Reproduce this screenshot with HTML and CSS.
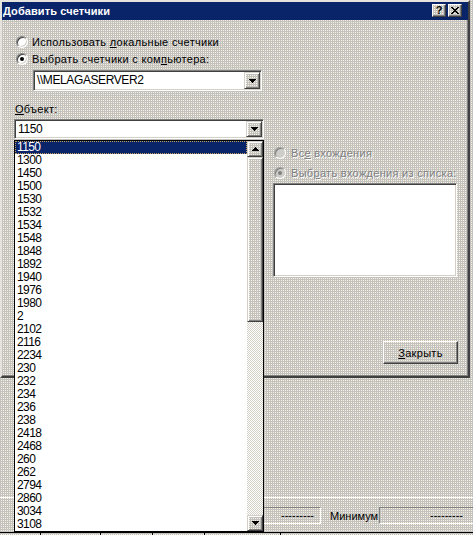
FILE: index.html
```html
<!DOCTYPE html>
<html lang="ru">
<head>
<meta charset="utf-8">
<title>Добавить счетчики</title>
<link rel="stylesheet" href="styles.css">
</head>
<body>
<div class="monitor face">
  <div class="status">
    <div class="stat-row">
      <div class="field first">---------</div>
      <span class="stat-label">Минимум</span>
      <div class="field second">---------</div>
    </div>
    <div class="axis"><i></i><i></i><i></i><i></i><i></i></div>
  </div>
</div>

<div class="dialog face">
  <div class="titlebar">
    <span class="title">Добавить счетчики</span>
    <div class="caption-btns">
      <span class="cap-btn face">?</span>
      <span class="cap-btn face">
        <svg width="8" height="7" viewBox="0 0 8 7" shape-rendering="crispEdges"><path d="M0 0h2v1h1v1h2v-1h1v-1h2v1h-1v1h-1v1h-1v1h1v1h1v1h1v1h-2v-1h-1v-1h-2v1h-1v1h-2v-1h1v-1h1v-1h1v-1h-1v-1h-1v-1h-1z" fill="#000"/></svg>
      </span>
    </div>
  </div>
  <div class="dlg-body">
    <div class="radio-row"><span class="radio"></span><span>Использовать <u>л</u>окальные счетчики</span></div>
    <div class="radio-row"><span class="radio checked"></span><span>Выбрать счетчики с ком<u>п</u>ьютера:</span></div>
    <div class="combo server">
      <span class="combo-text">\\MELAGASERVER2</span>
      <span class="drop-btn face"><svg width="7" height="4" viewBox="0 0 7 4" shape-rendering="crispEdges"><path d="M0 0h7v1h-1v1h-1v1h-1v1h-1v-1h-1v-1h-1v-1h-1z" fill="#000"/></svg></span>
    </div>
    <div class="label"><u>О</u>бъект:</div>
    <div class="combo object">
      <span class="combo-text">1150</span>
      <span class="drop-btn face"><svg width="7" height="4" viewBox="0 0 7 4" shape-rendering="crispEdges"><path d="M0 0h7v1h-1v1h-1v1h-1v1h-1v-1h-1v-1h-1v-1h-1z" fill="#000"/></svg></span>
      <div class="dropdown">
        <div class="dd-items">
          <div class="dd-item sel">1150</div>
          <div class="dd-item">1300</div>
          <div class="dd-item">1450</div>
          <div class="dd-item">1500</div>
          <div class="dd-item">1530</div>
          <div class="dd-item">1532</div>
          <div class="dd-item">1534</div>
          <div class="dd-item">1548</div>
          <div class="dd-item">1848</div>
          <div class="dd-item">1892</div>
          <div class="dd-item">1940</div>
          <div class="dd-item">1976</div>
          <div class="dd-item">1980</div>
          <div class="dd-item">2</div>
          <div class="dd-item">2102</div>
          <div class="dd-item">2116</div>
          <div class="dd-item">2234</div>
          <div class="dd-item">230</div>
          <div class="dd-item">232</div>
          <div class="dd-item">234</div>
          <div class="dd-item">236</div>
          <div class="dd-item">238</div>
          <div class="dd-item">2418</div>
          <div class="dd-item">2468</div>
          <div class="dd-item">260</div>
          <div class="dd-item">262</div>
          <div class="dd-item">2794</div>
          <div class="dd-item">2860</div>
          <div class="dd-item">3034</div>
          <div class="dd-item">3108</div>
        </div>
        <div class="sb">
          <span class="sb-btn face"><svg width="7" height="4" viewBox="0 0 7 4" shape-rendering="crispEdges"><path d="M3 0h1v1h1v1h1v1h1v1h-7v-1h1v-1h1v-1h1z" fill="#000"/></svg></span>
          <span class="sb-thumb face"></span>
          <span class="sb-track"></span>
          <span class="sb-btn face"><svg width="7" height="4" viewBox="0 0 7 4" shape-rendering="crispEdges"><path d="M0 0h7v1h-1v1h-1v1h-1v1h-1v-1h-1v-1h-1v-1h-1z" fill="#000"/></svg></span>
        </div>
      </div>
    </div>
    <div class="instances">
      <div class="radio-row dis"><span class="radio off"></span><span>Вс<u>е</u> вхождения</span></div>
      <div class="radio-row dis"><span class="radio off checked"></span><span>Выб<u>р</u>ать вхождения из списка:</span></div>
      <div class="listbox"></div>
      <div class="close-btn face"><span><u>З</u>акрыть</span></div>
    </div>
  </div>
</div>
</body>
</html>
```

FILE: styles.css
```css
* { box-sizing: border-box; }
html, body { margin: 0; padding: 0; }
body {
  width: 473px;
  height: 535px;
  overflow: hidden;
  position: relative;
  font-family: "Liberation Sans", Arial, sans-serif;
  font-size: 11px;
  color: #000;
  background: #c6c4c0;
}
u { text-decoration: underline; text-underline-offset: 1px; }

.face {
  background-color: #c3c2bf;
  background-image: conic-gradient(#f6f0e0 0 25%, transparent 0);
  background-size: 2px 2px;
}

/* back window */
.monitor {
  position: absolute;
  left: 0; top: 0;
  width: 473px; height: 535px;
  display: flex;
  flex-direction: column;
  justify-content: flex-end;
}
.status { border-top: 1px solid #fff; padding-top: 9px; }
.stat-row { display: flex; align-items: center; height: 17px; margin-bottom: 8px; white-space: nowrap; }
.field {
  height: 17px;
  border: 1px solid;
  border-color: #808080 #fff #fff #808080;
  text-align: right;
  line-height: 15px;
  flex: none;
}
.field.first { margin-left: 200px; width: 121px; padding-right: 6px; }
.stat-label { margin-left: 9px; width: 44px; flex: none; }
.field.second { margin-left: 5px; width: 100px; padding-right: 15px; }
.axis { border-top: 1px solid #000; height: 3px; display: flex; }
.axis i { width: 1px; height: 2px; background: #000; flex: none; }
.axis i:nth-child(1) { margin-left: 40px; }
.axis i:nth-child(2) { margin-left: 59px; }
.axis i:nth-child(3) { margin-left: 51px; }
.axis i:nth-child(4) { margin-left: 51px; }
.axis i:nth-child(5) { margin-left: 75px; }

/* dialog */
.dialog {
  position: absolute;
  left: 0; top: 0;
  width: 470px; height: 378px;
  border: 2px solid;
  border-color: #e6e3de #404040 #404040 #e6e3de;
  box-shadow: inset -1px -1px #808080;
}
.titlebar {
  height: 18px;
  background: #0a246a;
  color: #fff;
  display: flex;
  align-items: flex-start;
  padding-left: 1px;
}
.title { font-weight: bold; font-size: 11px; line-height: 18px; letter-spacing: 0.1px; }
.caption-btns { margin-left: auto; margin-right: 6px; margin-top: 2px; display: flex; gap: 2px; }
.cap-btn {
  width: 14px; height: 13px;
  border: 1px solid;
  border-color: #fff #404040 #404040 #fff;
  box-shadow: inset -1px -1px #808080;
  color: #000;
  font-weight: bold;
  font-size: 11px;
  line-height: 11px;
  display: flex;
  align-items: center;
  justify-content: center;
}

.dlg-body { padding: 13px 0 0 12px; }
.radio-row { display: flex; align-items: center; height: 17px; margin-left: 2px; white-space: nowrap; letter-spacing: 0.3px; }
.radio {
  width: 12px; height: 12px;
  border-radius: 50%;
  background: #fff;
  border: 1px solid;
  border-color: #808080 #fff #fff #808080;
  box-shadow: inset 1px 1px #404040, inset -1px -1px #d4d0c8;
  margin-right: 4px;
  flex: none;
  display: flex;
  align-items: center;
  justify-content: center;
}
.radio.checked::after {
  content: "";
  width: 4px; height: 4px;
  border-radius: 50%;
  background: #000;
}
.radio.off { background: #cfcdc9; box-shadow: inset 1px 1px #808080; border-color: #a0a0a0 #fff #fff #a0a0a0; margin-right: 5px; }
.radio.off.checked::after { background: #808080; }
.dis { color: #808080; text-shadow: 1px 1px #fff; }

.combo {
  display: flex;
  align-items: stretch;
  border: 1px solid;
  border-color: #808080 #fff #fff #808080;
  box-shadow: inset 1px 1px #404040, inset -1px -1px #d4d0c8;
  background: #fff;
  padding: 1px;
  position: relative;
}
.combo-text { flex: 1; padding-left: 2px; line-height: 17px; font-size: 12px; letter-spacing: -0.4px; }
.combo.server { margin-left: 19px; margin-top: 3px; width: 229px; height: 21px; }
.combo.object { margin-top: 3px; width: 250px; height: 20px; }
.combo.object .combo-text { line-height: 16px; }
.drop-btn {
  width: 16px;
  flex: none;
  border: 1px solid;
  border-color: #d4d0c8 #404040 #404040 #d4d0c8;
  box-shadow: inset 1px 1px #fff, inset -1px -1px #808080;
  display: flex;
  align-items: center;
  justify-content: center;
}
.label { margin: 11px 0 0 1px; line-height: 14px; letter-spacing: 0.3px; }

.dropdown {
  position: absolute;
  left: -1px; top: 20px;
  width: 250px; height: 392px;
  border: 1px solid #000;
  background: #fff;
  display: flex;
  z-index: 5;
}
.dd-items { flex: 1; }
.dd-item { height: 13px; line-height: 13px; padding-left: 2px; font-size: 12px; letter-spacing: -0.6px; }
.dd-item.sel { background: #0a246a; color: #fff; outline: 1px dotted #c0a060; outline-offset: -1px; }
.sb { width: 16px; display: flex; flex-direction: column; flex: none; }
.sb-btn, .sb-thumb {
  border: 1px solid;
  border-color: #d4d0c8 #404040 #404040 #d4d0c8;
  box-shadow: inset 1px 1px #fff, inset -1px -1px #808080;
  flex: none;
}
.sb-btn { height: 16px; display: flex; align-items: center; justify-content: center; }
.sb-thumb { height: 165px; }
.sb-track {
  flex: 1;
  background-color: #fff;
  background-image: conic-gradient(#d4d0c8 0 25%, transparent 0 50%, #d4d0c8 0 75%, transparent 0);
  background-size: 2px 2px;
}

.instances {
  margin-left: 259px;
  margin-top: 4px;
  width: 185px;
  display: flex;
  flex-direction: column;
}
.instances .radio-row { height: 20px; margin-left: 1px; }
.listbox {
  width: 184px; height: 94px;
  background: #fff;
  border: 1px solid;
  border-color: #808080 #fff #fff #808080;
  box-shadow: inset 1px 1px #404040, inset -1px -1px #d4d0c8;
}
.close-btn {
  margin-top: 64px;
  align-self: flex-end;
  width: 75px; height: 23px;
  border: 1px solid;
  border-color: #fff #404040 #404040 #fff;
  box-shadow: inset -1px -1px #808080;
  display: flex;
  align-items: center;
  justify-content: center;
  letter-spacing: 0.3px;
}
```
